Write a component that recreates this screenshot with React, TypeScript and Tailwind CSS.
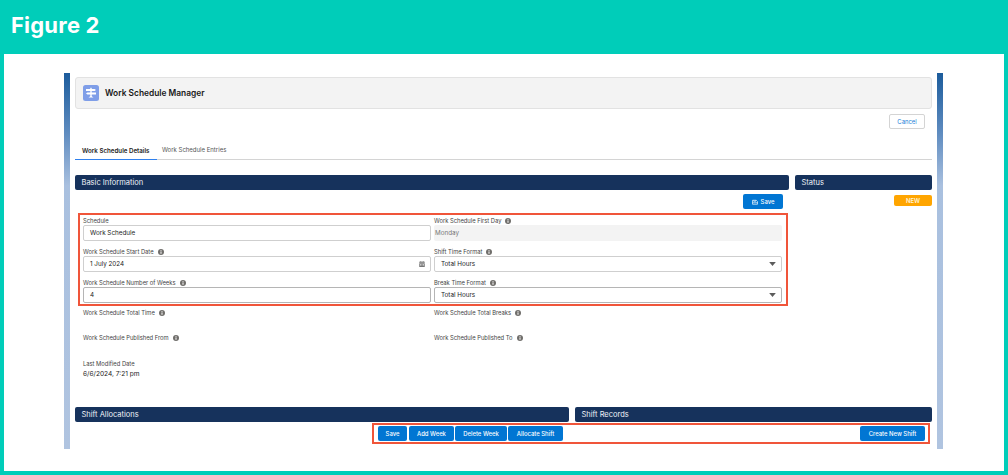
import React from "react";

function Info() {
  return (
    <svg viewBox="0 0 12 12" className="w-[6px] h-[6px] ml-[4px] shrink-0">
      <circle cx="6" cy="6" r="6" fill="#706e6b" />
      <rect x="5" y="5" width="2" height="4.5" fill="#fff" />
      <rect x="5" y="2.4" width="2" height="1.8" fill="#fff" />
    </svg>
  );
}

function Label({ text, info = true }: { text: string; info?: boolean }) {
  return (
    <div className="flex items-center h-[7px] text-[5.8px] leading-[7px] text-[#444] whitespace-nowrap">
      <span>{text}</span>
      {info && <Info />}
    </div>
  );
}

function Caret() {
  return (
    <svg viewBox="0 0 10 6" className="w-[7px] h-[4px]">
      <path d="M0 0h10L5 6z" fill="#5c5c5c" />
    </svg>
  );
}

function CalendarIcon() {
  return (
    <svg viewBox="0 0 12 12" className="w-[6px] h-[6px]">
      <rect x="3" y="0" width="1.4" height="2.2" fill="#777" />
      <rect x="7.6" y="0" width="1.4" height="2.2" fill="#777" />
      <rect x="0.5" y="1.4" width="11" height="2.2" fill="#777" />
      <path d="M.5 4.5h11V12H.5zM2 6v1.4h1.6V6zM5.2 6v1.4h1.6V6zM8.4 6v1.4H10V6zM2 8.8v1.4h1.6V8.8zM5.2 8.8v1.4h1.6V8.8zM8.4 8.8v1.4H10V8.8z" fill="#777" fillRule="evenodd" />
    </svg>
  );
}

function Input({ value, right, strong }: { value: string; right?: React.ReactNode; strong?: boolean }) {
  return (
    <div className={`h-[16px] mt-[1px] flex items-center justify-between rounded-[2px] border bg-white pl-[6px] pr-[5px] text-[6.3px] text-[#222] ${strong ? "border-[#b5b5b5]" : "border-[#cfcfcf]"}`}>
      <span className="pt-[1px]">{value}</span>
      {right}
    </div>
  );
}

function Bar({ title, className }: { title: string; className: string }) {
  return (
    <div className={`${className} h-[15px] flex items-center rounded-[2px] bg-[#16325c] pl-[6.5px] pt-[1px] text-[7.5px] text-[#f0f3f8] whitespace-nowrap`}>
      {title}
    </div>
  );
}

function Btn({ text, className }: { text: string; className: string }) {
  return (
    <div className={`${className} h-[15px] flex items-center justify-center rounded-[2px] bg-[#0176d3] pt-[1px] text-[5.9px] font-medium text-white whitespace-nowrap`}>
      {text}
    </div>
  );
}

function Stripe() {
  return <div className="w-[6px] shrink-0 bg-[linear-gradient(180deg,#1c5c9c_0%,#5f8cc0_16%,#a9c0df_30%,#b0c4e0_100%)]" />;
}

export default function App() {
  return (
    <div className="w-[1008px] h-[475px] overflow-hidden bg-[#00cdb9] flex flex-col font-['Inter',sans-serif]">
      <div className="h-[54px] shrink-0 flex items-center pl-[11px] pb-[4px] text-[22px] tracking-[0.2px] font-bold text-white">
        Figure 2
      </div>
      <div className="flex-1 mx-[4px] mb-[4px] bg-white pt-[19px] pb-[22px] pl-[60px] pr-[61px] flex">
        <div className="flex-1 flex min-w-0">
          <Stripe />
          <div className="flex-1 min-w-0 px-[5px] pt-[4px] flex flex-col">
            <div className="h-[32px] flex items-center rounded-[3px] border border-[#e2e2e2] bg-[#f3f3f3] pl-[7px]">
              <svg viewBox="0 0 16 16" className="w-[16px] h-[16px] shrink-0">
                <rect width="16" height="16" rx="2.5" fill="#7f9ee8" />
                <path d="M3 4h8.6L13 5l-1.400 1H3z" fill="#fff" />
                <path d="M13 7.400H4.400L3 8.400l1.400 1H13z" fill="#fff" />
                <rect x="7.300" y="2.800" width="1.400" height="9" fill="#fff" />
                <path d="M5.500 12.600h5L8 10.800z" fill="#fff" />
              </svg>
              <div className="ml-[6px] text-[8.4px] font-semibold text-[#181818] whitespace-nowrap">Work Schedule Manager</div>
            </div>
            <div className="h-[20px] flex justify-end items-end pr-[7px]">
              <div className="h-[15px] w-[36px] flex items-center justify-center rounded-[2px] border border-[#d4d4d4] bg-white pt-[1px] text-[5.9px] text-[#1b7fd8]">Cancel</div>
            </div>
            <div className="h-[31px] flex items-end border-b border-[#d4d4d4]">
              <div className="h-[16px] w-[82px] -mb-px pl-[7px] pt-[2px] border-b-[1.5px] border-[#2f80ed] text-[6.2px] font-semibold text-[#222] whitespace-nowrap">Work Schedule Details</div>
              <div className="h-[16px] pl-[5px] pt-[2px] text-[6px] text-[#555] whitespace-nowrap">Work Schedule Entries</div>
            </div>

            <div className="mt-[15px] flex gap-[6px]">
              <div className="w-[714px] shrink-0">
                <Bar title="Basic Information" className="w-full" />
                <div className="mt-[4px] flex justify-end pr-[6px]">
                  <div className="h-[15px] w-[40px] flex items-center justify-center gap-[3px] rounded-[2px] bg-[#0176d3] text-[5.9px] font-medium text-white">
                    <svg viewBox="0 0 12 12" className="w-[6px] h-[6px]" fill="none" stroke="#fff" strokeWidth="1.3">
                      <path d="M1 2.500h7.500L11 5v5.500H1z" />
                      <path d="M3.500 2.500v2h4v-2" />
                      <path d="M1 7.500h10" />
                    </svg>
                    <span className="pt-[1px]">Save</span>
                  </div>
                </div>
                <div className="mt-[4px] ml-[3px] w-[710px] h-[93px] border-2 border-[#f0553a] pl-[3px] pr-[4px] pt-[2px] grid grid-cols-[348px_348px] gap-x-[3px] content-start">
                  <div>
                    <Label text="Schedule" info={false} />
                    <Input value="Work Schedule" />
                  </div>
                  <div>
                    <Label text="Work Schedule First Day" />
                    <div className="h-[16px] mt-[1px] flex items-center rounded-[2px] bg-[#f3f3f3] pl-[1px] pt-[1px] text-[6.3px] text-[#777]">Monday</div>
                  </div>
                  <div className="mt-[7px]">
                    <Label text="Work Schedule Start Date" />
                    <Input value="1 July 2024" right={<CalendarIcon />} />
                  </div>
                  <div className="mt-[7px]">
                    <Label text="Shift Time Format" />
                    <Input value="Total Hours" right={<Caret />} />
                  </div>
                  <div className="mt-[7px]">
                    <Label text="Work Schedule Number of Weeks" />
                    <Input value="4" strong />
                  </div>
                  <div className="mt-[7px]">
                    <Label text="Break Time Format" />
                    <Input value="Total Hours" right={<Caret />} strong />
                  </div>
                </div>
                <div className="ml-[8px] mt-[3px] grid grid-cols-[351px_351px] gap-y-[18px]">
                  <Label text="Work Schedule Total Time" />
                  <Label text="Work Schedule Total Breaks" />
                  <Label text="Work Schedule Published From" />
                  <Label text="Work Schedule Published To" />
                </div>
                <div className="ml-[8px] mt-[19px]">
                  <Label text="Last Modified Date" info={false} />
                  <div className="mt-[3px] h-[8px] leading-[8px] text-[6.6px] text-[#222]">6/6/2024, 7:21 pm</div>
                </div>
              </div>
              <div className="flex-1 min-w-0">
                <Bar title="Status" className="w-full" />
                <div className="mt-[5px] flex justify-end">
                  <div className="h-[11px] w-[38px] flex items-center justify-center rounded-[2px] bg-[#ffa500] pt-[1px] text-[5.9px] font-semibold text-[#fff4d9]">NEW</div>
                </div>
              </div>
            </div>

            <div className="mt-[29px] flex gap-[6px]">
              <Bar title="Shift Allocations" className="w-[494px]" />
              <Bar title="Shift Records" className="flex-1" />
            </div>
            <div className="mt-[1px] ml-[297px] w-[558px] h-[21px] border-2 border-[#f0553a] flex items-center pl-[4px] pr-[3px]">
              <Btn text="Save" className="w-[29px]" />
              <Btn text="Add Week" className="w-[45px] ml-[2px]" />
              <Btn text="Delete Week" className="w-[52px] ml-[1px]" />
              <Btn text="Allocate Shift" className="w-[55px] ml-[1px]" />
              <Btn text="Create New Shift" className="w-[65px] ml-auto" />
            </div>
          </div>
          <Stripe />
        </div>
      </div>
    </div>
  );
}
